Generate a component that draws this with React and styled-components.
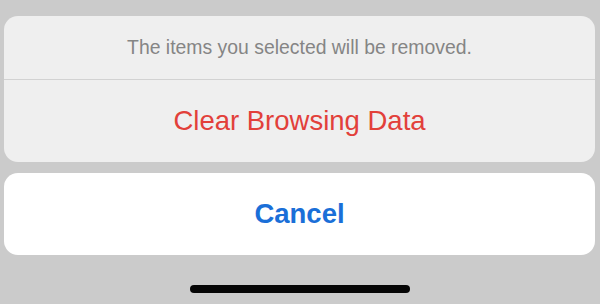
import React from "react";
import styled, { createGlobalStyle } from "styled-components";

const GlobalStyle = createGlobalStyle`
  body {
    margin: 0;
    background-color: #cbcbcb;
    font-family: "Liberation Sans", Arial, sans-serif;
  }
`;

const Screen = styled.div`
  height: 304px;
  display: flex;
  flex-direction: column;
  padding: 16px 5px 0 4px;
  box-sizing: border-box;
`;

const Group = styled.div`
  display: flex;
  flex-direction: column;
  border-radius: 14px;
  overflow: hidden;
  background-color: ${p => (p.plain ? "#ffffff" : "#efefef")};
  margin-bottom: ${p => p.gap || 0}px;
`;

const Message = styled.div`
  height: 63px;
  display: flex;
  align-items: center;
  justify-content: center;
  font-size: 19.4px;
  color: #858585;
  border-bottom: 1px solid #d2d2d2;
`;

const Action = styled.button`
  height: 82px;
  border: none;
  background: transparent;
  font-family: inherit;
  font-size: 27.5px;
  font-weight: ${p => (p.bold ? 700 : 400)};
  color: ${p => (p.destructive ? "#e2403a" : "#1a6fd8")};
  padding: 0;
  cursor: pointer;
`;

const HomeBar = styled.div`
  align-self: center;
  width: 220px;
  height: 8px;
  border-radius: 4px;
  background-color: #050505;
  margin-top: 30px;
`;

export default function App() {
  return (
    <>
      <GlobalStyle />
      <Screen>
        <Group gap={11}>
          <Message>The items you selected will be removed.</Message>
          <Action destructive>Clear Browsing Data</Action>
        </Group>
        <Group plain>
          <Action bold>Cancel</Action>
        </Group>
        <HomeBar />
      </Screen>
    </>
  );
}
